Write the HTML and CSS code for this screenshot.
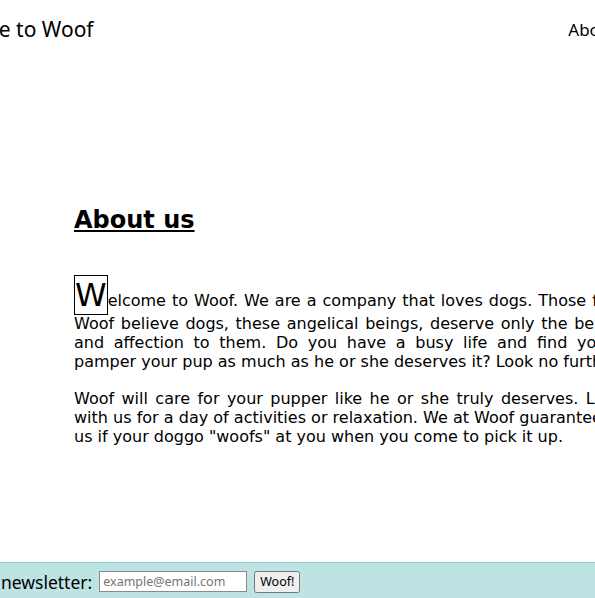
FILE: index.html
```html
<!DOCTYPE html>
<html lang="en">
<head>
<meta charset="utf-8">
<title>Woof</title>
<link rel="stylesheet" href="styles.css">
</head>
<body>
<div class="page">
  <header class="site-header">
    <h1 class="brand">Welcome to Woof</h1>
    <nav class="nav">
      <a href="#about">About us</a>
      <a href="#services">Services</a>
      <a href="#contact">Contact</a>
    </nav>
  </header>

  <main class="content" id="about">
    <h2 class="section-title">About us</h2>
    <p class="text dropcap">Welcome to Woof. We are a company that loves dogs. Those fur. We at Woof believe dogs, these angelical beings, deserve only the best of love and affection to them. Do you have a busy life and find you cannot pamper your pup as much as he or she deserves it? Look no further.</p>
    <p class="text">Woof will care for your pupper like he or she truly deserves. Leave him with us for a day of activities or relaxation. We at Woof guarantee. Believe us if your doggo "woofs" at you when you come to pick it up.</p>
  </main>

  <footer class="site-footer">
    <form class="newsletter">
      <label class="newsletter-label" for="email">Sign up for our newsletter:</label>
      <input class="newsletter-input" id="email" type="email" placeholder="example@email.com">
      <button class="newsletter-button" type="button">Woof!</button>
    </form>
  </footer>
</div>
</body>
</html>
```

FILE: styles.css
```css
html, body {
  margin: 0;
  padding: 0;
  overflow: hidden;
}

body {
  background: #ffffff;
  color: #000000;
}

.page {
  min-height: 100vh;
  display: flex;
  flex-direction: column;
}

.site-header {
  display: flex;
  justify-content: space-between;
  align-items: center;
  height: 58px;
  margin-left: -80px;
  margin-right: -211px;
  font-family: "Noto Sans", "Open Sans", sans-serif;
}

.brand {
  margin: 0;
  font-size: 21px;
  font-weight: 400;
}

.nav {
  display: flex;
  gap: 20px;
}

.nav a {
  color: #000;
  text-decoration: none;
  font-size: 17px;
}

.content {
  padding: 148px 0 0 74px;
  font-family: "DejaVu Sans", Verdana, sans-serif;
}

.section-title {
  margin: 0 0 42px;
  font-size: 24px;
  font-weight: 700;
  text-decoration: underline;
}

.text {
  width: 597px;
  margin: 0 0 18px;
  font-size: 16px;
  line-height: normal;
  text-align: justify;
}

.dropcap::first-letter {
  font-size: 32px;
  border: 1px solid #000;
}

.site-footer {
  margin-top: auto;
  height: 35px;
  background: #bde4e2;
  border-top: 1px solid #86cdc8;
  display: flex;
  align-items: center;
  font-family: "Noto Sans", "Open Sans", sans-serif;
}

.newsletter {
  display: flex;
  align-items: center;
  gap: 7px;
  margin: 2px 0 0 -127px;
}

.newsletter-label {
  font-size: 17.5px;
}

.newsletter-input {
  box-sizing: border-box;
  width: 148px;
  height: 21px;
  font-size: 12.5px;
  font-family: "Noto Sans", sans-serif;
  border: 1px solid #8a8a8a;
  padding: 1px 3px;
}

.newsletter-button {
  box-sizing: border-box;
  height: 22px;
  font-family: "Noto Sans", sans-serif;
  font-size: 12.5px;
  padding: 0 4px;
}
```
